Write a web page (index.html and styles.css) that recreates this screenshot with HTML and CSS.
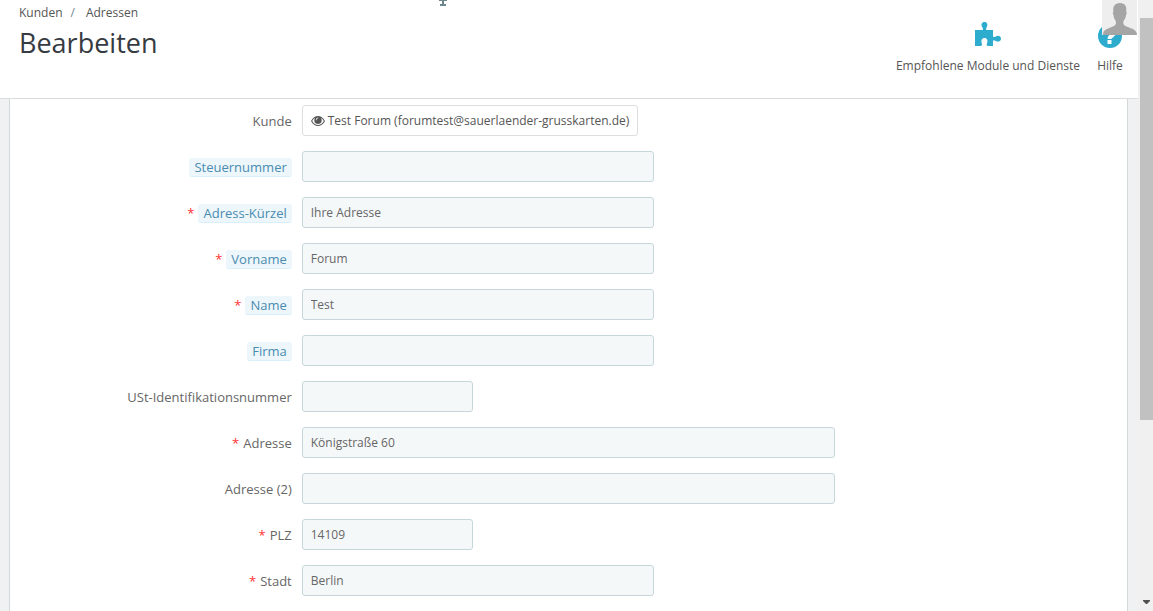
FILE: index.html
```html
<!DOCTYPE html>
<html lang="de">
<head>
<meta charset="utf-8">
<title>Bearbeiten</title>
<link rel="stylesheet" href="styles.css">
</head>
<body>
<div class="page">
  <header class="header">
    <div class="heading">
      <nav class="breadcrumb" aria-label="Breadcrumb">
        <a href="#">Kunden</a><span class="separator">/</span><a href="#">Adressen</a>
      </nav>
      <h1 class="title">Bearbeiten</h1>
    </div>
    <nav class="toolbar" aria-label="Werkzeuge">
      <a class="tool" href="#">
        <svg class="tool-icon" viewBox="0 1 28 26" aria-hidden="true"><path d="M1 9H8C9.300 9 9.300 7.500 8.300 6.200C6.600 3.700 7.800 1 10.500 1C13.200 1 14.200 3.700 12.700 6.200C11.800 7.600 11.800 9 13 9H19V14.500C19 16.200 20.200 16.500 21.700 15.500C24.200 14 27 15.300 27 17.700C27 20.200 24.200 21.400 21.700 20C20.200 19 19 19 19 20.700V25H14C12.500 25 12.400 23.700 13 22.200C14.200 19.300 13 17 10.500 17C8 17 6.800 19.300 7.800 22.200C8.500 24 7.800 25 6.500 25H1Z"/></svg>
        <span>Empfohlene Module und Dienste</span>
      </a>
      <a class="tool" href="#">
        <svg class="tool-icon" viewBox="0 0 28 26" aria-hidden="true"><circle cx="14" cy="14" r="12"/><path class="question" d="M9.500 11C9.500 5.500 18 5.500 18 11C18 14 13.500 13.500 13.500 17"/><path class="question" d="M13.500 18V22"/></svg>
        <span>Hilfe</span>
      </a>
    </nav>
    <svg class="avatar" viewBox="0 0 35 35" aria-label="Profil" role="img"><path class="avatar-bg" d="M0 0H35V35H0Z"/><path class="avatar-person" d="M1 35C1 31.500 2.500 30 6 28.500L12 26C14 25 14.500 23 13.500 20.500C12 18.500 11.600 17 11.500 15C10.500 14 10.800 12 11.400 11.500C10.800 6 12.500 3.500 18 3C22.800 3.200 25 6 24.200 11.500C25 12.200 24.700 14 24 15C23.800 17.500 23 19 21.500 21C21 23.500 21.500 25 23.500 26L29.500 28.500C33.500 30 35 32 35 35Z"/></svg>
    <svg class="resize-mark" viewBox="0 0 8 6" aria-hidden="true"><path d="M0 0H8V1H5V4H7V6H1V4H3V1H0Z"/></svg>
  </header>
  <main class="content">
    <form class="panel">
      <div class="row">
        <span class="label">Kunde</span>
        <div class="field field-large"><a class="customer" href="#"><svg class="eye" viewBox="0 0 14 10" aria-hidden="true"><path fill-rule="evenodd" d="M0 5C2 1.800 4.200 0 7 0C9.800 0 12 1.800 14 5C12 8.200 9.800 10 7 10C4.200 10 2 8.200 0 5ZM1.200 5C2.800 7.500 4.700 9 7 9C9.300 9 11.200 7.500 12.800 5C12 3.600 11.200 2.800 10 2C11.700 5 10 8 7 8C4 8 2.300 5 4 2C2.800 2.800 2 3.600 1.200 5ZM4.800 4.300H5.500C5.500 3 6.100 2.300 7.200 2.200V1.500C5.800 1.500 4.800 2.700 4.800 4.300Z"/></svg>Test Forum (forumtest@sauerlaender-grusskarten.de)</a></div>
      </div>
      <div class="row">
        <label class="label" for="tax"><span class="hint">Steuernummer</span></label>
        <div class="field field-medium"><input class="input" id="tax" type="text"></div>
      </div>
      <div class="row">
        <label class="label" for="alias"><span class="required">*</span><span class="hint">Adress-Kürzel</span></label>
        <div class="field field-medium"><input class="input" id="alias" type="text" value="Ihre Adresse"></div>
      </div>
      <div class="row">
        <label class="label" for="firstname"><span class="required">*</span><span class="hint">Vorname</span></label>
        <div class="field field-medium"><input class="input" id="firstname" type="text" value="Forum"></div>
      </div>
      <div class="row">
        <label class="label" for="lastname"><span class="required">*</span><span class="hint">Name</span></label>
        <div class="field field-medium"><input class="input" id="lastname" type="text" value="Test"></div>
      </div>
      <div class="row">
        <label class="label" for="company"><span class="hint">Firma</span></label>
        <div class="field field-medium"><input class="input" id="company" type="text"></div>
      </div>
      <div class="row">
        <label class="label" for="vat">USt-Identifikationsnummer</label>
        <div class="field field-small"><input class="input" id="vat" type="text"></div>
      </div>
      <div class="row">
        <label class="label" for="address"><span class="required">*</span>Adresse</label>
        <div class="field field-large"><input class="input" id="address" type="text" value="Königstraße 60"></div>
      </div>
      <div class="row">
        <label class="label" for="address2">Adresse (2)</label>
        <div class="field field-large"><input class="input" id="address2" type="text"></div>
      </div>
      <div class="row">
        <label class="label" for="zip"><span class="required">*</span>PLZ</label>
        <div class="field field-small"><input class="input" id="zip" type="text" value="14109"></div>
      </div>
      <div class="row">
        <label class="label" for="city"><span class="required">*</span>Stadt</label>
        <div class="field field-medium"><input class="input" id="city" type="text" value="Berlin"></div>
      </div>
    </form>
  </main>
</div>
<div class="scrollbar" aria-hidden="true">
  <div class="thumb"></div>
  <svg class="arrow" viewBox="0 0 7 4"><path d="M0 0H7V1L4 4H3L0 1Z"/></svg>
</div>
</body>
</html>
```
FILE: styles.css
```css
* {
  box-sizing: border-box;
}

body {
  display: flex;
  height: 100vh;
  margin: 0;
  overflow: hidden;
  background: #eff1f2;
  color: #555;
  font: 12px/17px "Open Sans", "Noto Sans", sans-serif;
}

a {
  color: inherit;
  text-decoration: none;
}

.page {
  display: flex;
  flex: 1;
  flex-direction: column;
  min-width: 0;
}

.header {
  position: relative;
  display: flex;
  justify-content: space-between;
  flex-shrink: 0;
  padding: 4px 14px 24px 19px;
  border-bottom: 1px solid #dadcde;
  background: #fff;
}

.separator {
  margin: 0 11px 0 8px;
  color: #6c868e;
}

.title {
  margin: 4px 0 0;
  color: #363a41;
  font-size: 27px;
  font-weight: 400;
  line-height: 36px;
}

.toolbar {
  display: flex;
  gap: 16px;
  padding-top: 18px;
}

.tool {
  display: flex;
  flex-direction: column;
  align-items: center;
  gap: 9px;
}

.tool-icon {
  width: 28px;
  height: 26px;
  fill: #2eacce;
}

.question {
  fill: none;
  stroke: #fff;
  stroke-width: 4;
}

.avatar {
  position: absolute;
  top: 0;
  right: 1px;
  width: 35px;
  height: 35px;
}

.avatar-bg {
  fill: #eee;
}

.avatar-person {
  fill: #a5a5a5;
}

.resize-mark {
  position: absolute;
  top: 0;
  left: 439px;
  width: 8px;
  height: 6px;
  fill: #6c868e;
}

.content {
  display: flex;
  flex: 1;
  min-height: 0;
  padding: 0 10px 0 9px;
}

.panel {
  display: flex;
  flex: 1;
  flex-direction: column;
  gap: 15px;
  padding: 6px 15px;
  border: solid #d3d8db;
  border-width: 0 1px;
  background: #fff;
}

.row {
  display: grid;
  grid-template-columns: repeat(12, minmax(0, 1fr));
}

.label {
  display: flex;
  grid-column: span 3;
  align-items: center;
  justify-content: flex-end;
  gap: 4px;
  padding: 1px 5px 0;
  color: #666;
  font-size: 13px;
  line-height: 18px;
}

.required {
  color: #f33;
}

.hint {
  padding: 0 5px;
  border-bottom: 1px solid #d9eff9;
  border-radius: 3px;
  background: #edf7fb;
  color: #4a8bb0;
}

.field {
  padding: 0 5px;
}

.field-small {
  grid-column: span 2;
}

.field-medium {
  grid-column: span 4;
}

.field-large {
  grid-column: span 6;
}

.input {
  display: block;
  width: 100%;
  height: 31px;
  padding: 6px 8px;
  border: 1px solid #c7d6db;
  border-radius: 3px;
  background: #f5f8f9;
  color: #666;
  font: inherit;
}

.customer {
  display: inline-flex;
  align-items: center;
  gap: 3px;
  height: 31px;
  padding: 0 8px;
  border: 1px solid #dedede;
  border-radius: 3px;
  white-space: nowrap;
}

.eye {
  width: 14px;
  height: 10px;
  fill: #555;
}

.scrollbar {
  display: flex;
  flex-direction: column;
  justify-content: space-between;
  align-items: center;
  width: 15px;
  padding: 18px 0 7px 2px;
  background: #f0f0f0;
}

.thumb {
  width: 100%;
  height: 68.6%;
  background: #c1c1c1;
}

.arrow {
  width: 7px;
  height: 4px;
  fill: #505050;
}
```
